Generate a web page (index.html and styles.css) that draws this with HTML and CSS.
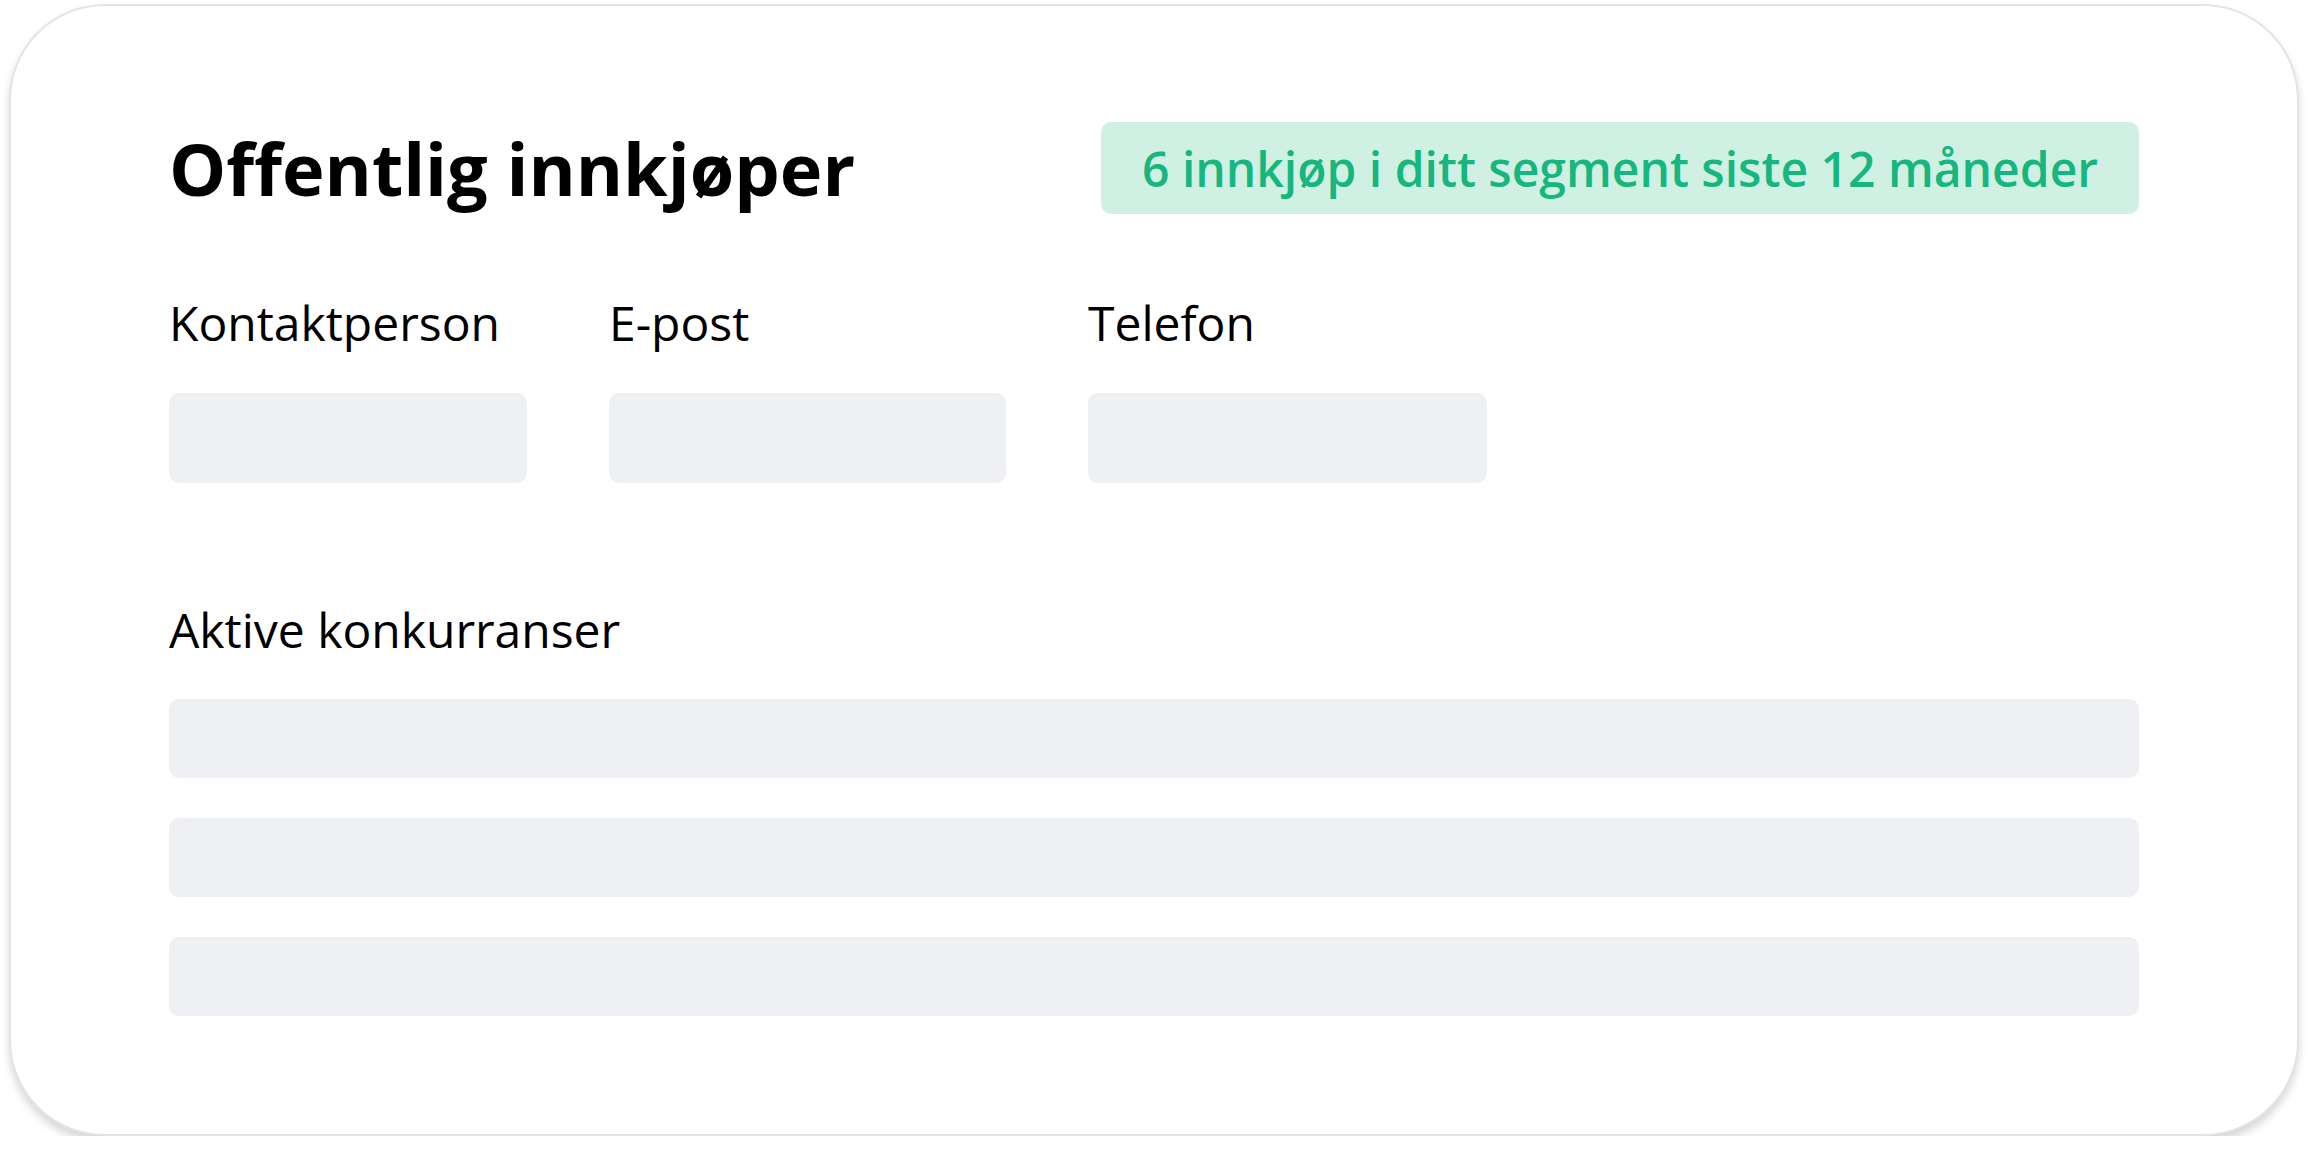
FILE: index.html
```html
<!DOCTYPE html>
<html lang="no">
<head>
<meta charset="utf-8">
<title>Offentlig innkjøper</title>
<link rel="stylesheet" href="styles.css">
</head>
<body>
<div class="card">
  <div class="header">
    <h1 class="title">Offentlig innkjøper</h1>
    <div class="badge">6 innkjøp i ditt segment siste 12 måneder</div>
  </div>
  <div class="fields">
    <div class="field f1">
      <div class="label">Kontaktperson</div>
      <div class="box"></div>
    </div>
    <div class="field f2">
      <div class="label">E-post</div>
      <div class="box"></div>
    </div>
    <div class="field f3">
      <div class="label">Telefon</div>
      <div class="box"></div>
    </div>
  </div>
  <div class="section">
    <div class="label">Aktive konkurranser</div>
    <div class="bars">
      <div class="bar"></div>
      <div class="bar"></div>
      <div class="bar"></div>
    </div>
  </div>
</div>
</body>
</html>
```
FILE: styles.css
```css
* { box-sizing: border-box; }
html, body { margin: 0; padding: 0; background: #ffffff; }
body {
  font-family: "Open Sans", "Noto Sans", sans-serif;
  color: #000;
}
.card {
  margin: 4px 0 0 9px;
  width: 2290px;
  height: 1132px;
  border: 2px solid #e2e4ed;
  border-radius: 96px;
  background: #fff;
  box-shadow: 0 6px 9px rgba(0, 0, 0, 0.16);
  padding: 116px 158px 0 158px;
}
.header {
  display: flex;
  align-items: center;
  justify-content: space-between;
  height: 92px;
}
.title {
  margin: 0;
  font-size: 72px;
  font-weight: 700;
  line-height: 1.2;
  letter-spacing: 0;
}
.badge {
  height: 92px;
  display: flex;
  align-items: center;
  padding: 0 41px;
  background: #d1f0e4;
  color: #16b67f;
  border-radius: 10px;
  font-size: 48px;
  font-weight: 600;
}
.label {
  font-size: 48px;
  line-height: 60px;
  font-weight: 400;
}
.fields {
  display: flex;
  gap: 82px;
  margin-top: 79px;
}
.field .box {
  margin-top: 40px;
  height: 90px;
  background: #eff0f4;
  border-radius: 10px;
}
.f1 { width: 358px; }
.f2 { width: 397px; }
.f3 { width: 399px; }
.section { margin-top: 117px; }
.bars {
  display: flex;
  flex-direction: column;
  gap: 40px;
  margin-top: 39px;
}
.bar {
  height: 79px;
  background: #eff0f4;
  border-radius: 10px;
}
```
